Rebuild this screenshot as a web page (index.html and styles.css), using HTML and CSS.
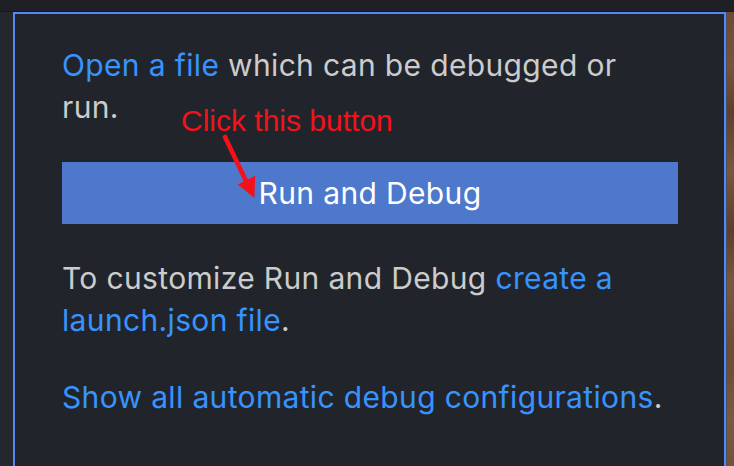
FILE: index.html
```html
<!DOCTYPE html>
<html lang="en">
<head>
<meta charset="utf-8">
<title>Run and Debug</title>
<link rel="stylesheet" href="styles.css">
</head>
<body>
<div class="window">
  <div class="topbar"></div>
  <div class="row">
    <div class="leftstrip"></div>
    <div class="panel">
      <p class="para para-narrow"><a class="link">Open a file</a> which can be debugged or run.</p>
      <div class="button">Run and Debug</div>
      <p class="para para-gap">To customize Run and Debug <a class="link">create a launch.json file</a>.</p>
      <p class="para para-gap2"><a class="link">Show all automatic debug configurations</a>.</p>

      <div class="note">Click this button</div>
      <svg class="arrow" width="70" height="80" viewBox="0 0 70 80">
        <line x1="25" y1="7" x2="46" y2="51" stroke="#f5101a" stroke-width="4.6" stroke-linecap="round"/>
        <polygon points="54.3,68 37.8,54.5 55.2,45.8" fill="#f5101a"/>
      </svg>
    </div>
    <div class="edge"></div>
    <div class="wood"></div>
  </div>
</div>
</body>
</html>
```

FILE: styles.css
```css
html, body {
  margin: 0;
  padding: 0;
}
body {
  width: 734px;
  height: 466px;
  overflow: hidden;
  background: #21252b;
  font-family: "Inter", "Noto Sans", "Liberation Sans", sans-serif;
}
.window {
  display: flex;
  flex-direction: column;
  height: 466px;
}
.topbar {
  height: 11px;
  flex: none;
  background: #1e2026;
  border-bottom: 1px solid #17191d;
}
.row {
  flex: 1;
  display: flex;
  min-height: 0;
}
.leftstrip {
  width: 13px;
  flex: none;
  background: #24272e;
}
.panel {
  position: relative;
  width: 713px;
  box-sizing: border-box;
  flex: none;
  background: #21252b;
  border: 2px solid #5289f4;
  border-bottom: none;
  padding: 30px 46px 0 47px;
}
.edge {
  width: 1px;
  flex: none;
  background: #4b5060;
}
.wood {
  flex: 1;
  background: linear-gradient(180deg, #6e4a31 0%, #7a5339 12%, #5f3f2a 22%, #7a573d 35%, #5d3e29 48%, #7b573c 60%, #6c4a33 75%, #7b5a40 90%, #735238 100%);
}
.para {
  margin: 0;
  font-size: 30px;
  line-height: 42px;
  letter-spacing: 0.35px;
  color: #cccccc;
}
.para-narrow {
  padding-right: 40px;
}
.para-gap {
  margin-top: 33px;
}
.para-gap2 {
  margin-top: 35px;
}
.link {
  color: #3794ff;
  text-decoration: none;
}
.button {
  margin-top: 34px;
  height: 62px;
  background: #4d78cc;
  color: #ffffff;
  font-size: 30px;
  letter-spacing: 0.35px;
  display: flex;
  align-items: center;
  justify-content: center;
}
.note {
  position: absolute;
  left: 166px;
  top: 92px;
  font-family: "Liberation Sans", Arial, sans-serif;
  font-size: 30px;
  line-height: 30px;
  color: #f5101a;
  white-space: nowrap;
}
.arrow {
  position: absolute;
  left: 185px;
  top: 116px;
  overflow: visible;
}
```
